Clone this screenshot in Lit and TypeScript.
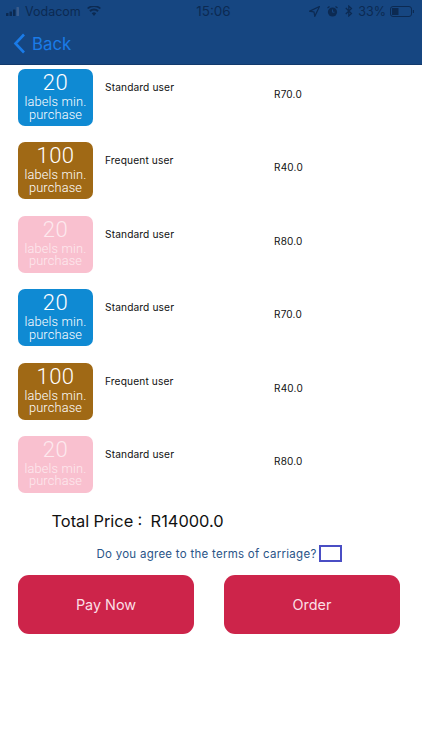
import { LitElement, html, css } from "lit";
import { customElement } from "lit/decorators.js";

interface Item { n: string; kind: string; label: string; price: string; }
const base: Item[] = [
  { n: "20", kind: "blue", label: "Standard user", price: "R70.0" },
  { n: "100", kind: "brown", label: "Frequent user", price: "R40.0" },
  { n: "20", kind: "pink", label: "Standard user", price: "R80.0" },
];
const items = [...base, ...base];

@customElement("app-root")
export class AppRoot extends LitElement {
  static styles = css`
    :host { display: block; width: 422px; height: 750px; background: #fff; overflow: hidden; font-family: Inter, "Liberation Sans", sans-serif; color: #111; }
    .header { height: 65px; background: #164681; border-bottom: 1px solid #123a6c; box-sizing: border-box; display: flex; flex-direction: column; }
    .status { height: 20px; display: grid; grid-template-columns: 1fr auto 1fr; align-items: center; color: #0c2a52; font-size: 12.5px; padding: 0 7px 0 6px; margin-top: 1px; }
    .status .left, .status .right { display: flex; align-items: center; }
    .status .left { gap: 4px; }
    .status .right { justify-content: flex-end; gap: 5px; }
    .status .time { font-size: 13.5px; margin-left: 6px; }
    .nav { display: flex; align-items: center; gap: 6px; padding: 3px 0 0 13px; color: #1a7be8; font-size: 16.8px; height: 42px; box-sizing: border-box; }
    .list { display: flex; flex-direction: column; gap: 16.4px; padding: 4px 0 0 18px; }
    .row { display: flex; align-items: flex-start; height: 57px; }
    .badge { width: 75px; height: 57px; border-radius: 7px; color: #fff; text-align: center; font-family: Roboto, "Noto Sans", sans-serif; display: flex; flex-direction: column; align-items: center; box-sizing: border-box; flex: none; padding-top: 1px; }
    .badge.blue { background: #0f8ad3; }
    .badge.brown { background: #a06915; }
    .badge.pink { background: #f9c0cf; color: #fde9ee; }
    .num { font-size: 22px; line-height: 26px; font-weight: 300; letter-spacing: 0.5px; }
    .sub { width: 70px; font-size: 12.8px; line-height: 12.5px; font-weight: 300; letter-spacing: 0.15px; }
    .label { width: 169px; margin-left: 12px; font-size: 10.2px; line-height: 13px; padding-top: 12px; letter-spacing: 0.12px; box-sizing: border-box; }
    .price { font-size: 10px; line-height: 13px; padding-top: 19px; letter-spacing: 0.2px; }
    .total { margin: 18px 0 0 51.5px; font-size: 16.4px; line-height: 20px; white-space: pre; word-spacing: -0.4px; }
    .terms { display: flex; justify-content: center; align-items: center; gap: 2px; margin: 14px 0 0 16px; font-size: 11.5px; color: #2a5488; letter-spacing: 0.27px; height: 18px; }
    .box { width: 23px; height: 17px; border: 2px solid #4a4ec4; box-sizing: border-box; }
    .actions { display: flex; gap: 30px; margin: 12px 0 0 18px; }
    .btn { width: 176px; height: 59px; border-radius: 11px; background: #cd244a; color: #fbdfe5; display: flex; align-items: center; justify-content: center; font-size: 14.4px; padding-top: 1px; box-sizing: border-box; }
  `;
  render() {
    return html`
      <div class="header">
        <div class="status">
          <div class="left">
            <svg width="15" height="9" viewBox="0 0 15 9"><rect x="0" y="6" width="2.5" height="3" rx=".5" fill="#0c2a52"/><rect x="3.5" y="4.5" width="2.5" height="4.5" rx=".5" fill="#0c2a52"/><rect x="7" y="2.5" width="2.5" height="6.5" rx=".5" fill="#0c2a52"/><rect x="10.5" y="0" width="2.5" height="9" rx=".5" fill="#3a5c8c"/></svg>
            <span>Vodacom</span>
            <svg style="margin-left:2px" width="14" height="10" viewBox="0 0 14 10"><path d="M7 10 4.8 7.3a3.4 3.4 0 0 1 4.4 0zM3.6 5.9 2.3 4.3a7.3 7.3 0 0 1 9.4 0l-1.3 1.6a5.3 5.3 0 0 0-6.8 0zM1.3 3 0 1.9A11 11 0 0 1 14 1.9L12.700 3A9 9 0 0 0 1.300 3z" fill="#0c2a52"/></svg>
          </div>
          <div class="time">15:06</div>
          <div class="right">
            <svg width="11" height="11" viewBox="0 0 11 11"><path d="M10.500.5 5.800 10.300 5 6 .7 5.200z" fill="none" stroke="#0c2a52" stroke-width="1.200"/></svg>
            <svg style="margin-left:2px" width="11" height="11" viewBox="0 0 11 11"><circle cx="5.500" cy="6" r="4.600" fill="#0c2a52"/><path d="M5.500 3.500V6.200H7.500" stroke="#164681" fill="none"/><path d="M.5 2 2.500.5M10.500 2 8.500.5" stroke="#0c2a52" stroke-width="1.200"/></svg>
            <svg style="margin-left:2px" width="8" height="12" viewBox="0 0 8 12"><path d="M.8 3 6.500 8.500 3.800 11V1L6.500 3.500.8 9" fill="none" stroke="#0c2a52" stroke-width="1.200"/></svg>
            <span>33%</span>
            <svg style="margin-left:-1px" width="25" height="11" viewBox="0 0 25 11"><rect x=".5" y=".5" width="21" height="10" rx="2.500" fill="none" stroke="#0c2a52"/><rect x="2" y="2" width="6.500" height="7" fill="#0c2a52"/><rect x="22.800" y="4" width="1.200" height="3" fill="#0c2a52"/></svg>
          </div>
        </div>
        <div class="nav">
          <svg width="13" height="21" viewBox="0 0 13 21"><path d="M11 1.500 2.500 10.500 11 19.500" fill="none" stroke="#1a7be8" stroke-width="2.600"/></svg>
          <span>Back</span>
        </div>
      </div>
      <div class="list">
        ${items.map((i) => html`
          <div class="row">
            <div class="badge ${i.kind}">
              <div class="num">${i.n}</div>
              <div class="sub">labels min. purchase</div>
            </div>
            <div class="label">${i.label}</div>
            <div class="price">${i.price}</div>
          </div>`)}
      </div>
      <div class="total">Total Price :  R14000.0</div>
      <div class="terms"><span>Do you agree to the terms of carriage?</span><div class="box"></div></div>
      <div class="actions">
        <div class="btn">Pay Now</div>
        <div class="btn">Order</div>
      </div>
    `;
  }
}
